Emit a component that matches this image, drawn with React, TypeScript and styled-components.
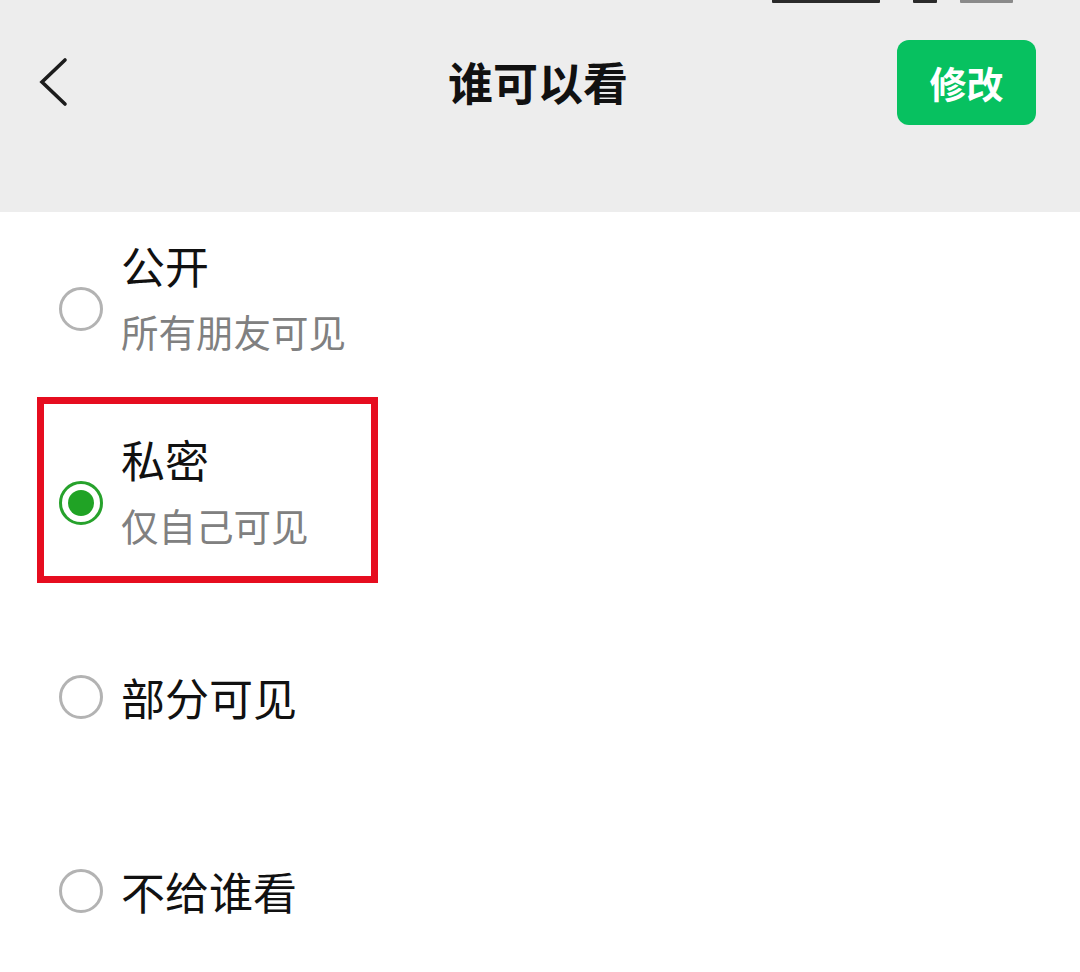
import * as React from "react";
import styled, { createGlobalStyle } from "styled-components";

const GlobalStyle = createGlobalStyle`
  html, body {
    margin: 0;
    padding: 0;
    background: #ffffff;
  }
  body {
    font-family: "Noto Sans CJK SC", "Noto Sans", sans-serif;
    -webkit-font-smoothing: antialiased;
  }
`;

const Page = styled.div`
  width: 1080px;
  height: 972px;
  overflow: hidden;
  background: #ffffff;
`;

const Header = styled.div`
  height: 212px;
  background: #ededed;
  display: flex;
  flex-direction: column;
`;

const StatusBar = styled.div`
  height: 30px;
  display: flex;
  justify-content: flex-end;
  align-items: flex-start;
  padding-right: 67px;
`;

const StatusMark = styled.div<{ $w: number; $gap: number; $light?: boolean }>`
  width: ${(p) => p.$w}px;
  margin-left: ${(p) => p.$gap}px;
  height: 3px;
  background: ${(p) => (p.$light ? "#8a8a8a" : "#2a2a2a")};
  border-radius: 0 0 1px 1px;
`;

const NavBar = styled.div`
  height: 104px;
  display: grid;
  grid-template-columns: 1fr auto 1fr;
  align-items: center;
  padding: 0 44px 0 38px;
`;

const BackButton = styled.div`
  display: flex;
  align-items: center;
  justify-self: start;
`;

const Title = styled.div`
  font-size: 45px;
  line-height: 56px;
  font-weight: 700;
  color: #111111;
  margin-left: 2px;
`;

const EditButton = styled.div`
  justify-self: end;
  width: 139px;
  height: 85px;
  border-radius: 12px;
  background: #07c160;
  color: #ffffff;
  font-size: 37px;
  font-weight: 700;
  display: flex;
  align-items: center;
  justify-content: center;
  margin-top: 1px;
`;

const List = styled.div`
  display: flex;
  flex-direction: column;
`;

const Row = styled.div`
  position: relative;
  height: 194px;
  display: flex;
  align-items: center;
  gap: 18px;
  padding-left: 59px;
`;

const Radio = styled.div<{ $checked?: boolean }>`
  flex: none;
  width: 44px;
  height: 44px;
  box-sizing: border-box;
  border-radius: 50%;
  border: 3px solid ${(p) => (p.$checked ? "#27a22c" : "#b3b3b3")};
  display: flex;
  align-items: center;
  justify-content: center;
  &::after {
    content: "";
    display: ${(p) => (p.$checked ? "block" : "none")};
    width: 26px;
    height: 26px;
    border-radius: 50%;
    background: #20a325;
  }
`;

const TextBlock = styled.div<{ $hasSub?: boolean }>`
  display: flex;
  flex-direction: column;
  margin-bottom: ${(p) => (p.$hasSub ? "20px" : "0")};
`;

const OptionTitle = styled.div`
  font-size: 44px;
  line-height: 64px;
  color: #111111;
`;

const OptionSub = styled.div`
  font-size: 37.5px;
  line-height: 68px;
  color: #808080;
`;

const Highlight = styled.div`
  position: absolute;
  left: 37px;
  top: -9px;
  width: 341px;
  height: 186px;
  box-sizing: border-box;
  border: 7px solid #e60d1f;
  pointer-events: none;
`;

const options = [
  { title: "公开", sub: "所有朋友可见" },
  { title: "私密", sub: "仅自己可见", checked: true, marked: true },
  { title: "部分可见" },
  { title: "不给谁看" },
];

const App = () => {
  return (
    <Page>
      <GlobalStyle />
      <Header>
        <StatusBar>
          <StatusMark $w={108} $gap={0} />
          <StatusMark $w={24} $gap={33} />
          <StatusMark $w={53} $gap={23} $light />
        </StatusBar>
        <NavBar>
          <BackButton>
            <svg width="30" height="50" viewBox="0 0 30 50">
              <polyline
                points="27,3 4,25 27,47"
                fill="none"
                stroke="#1c1c1c"
                strokeWidth="3.6"
                strokeLinecap="round"
                strokeLinejoin="miter"
              />
            </svg>
          </BackButton>
          <Title>谁可以看</Title>
          <EditButton>修改</EditButton>
        </NavBar>
      </Header>
      <List>
        {options.map((o) => (
          <Row key={o.title}>
            <Radio $checked={o.checked} />
            <TextBlock $hasSub={!!o.sub}>
              <OptionTitle>{o.title}</OptionTitle>
              {o.sub && <OptionSub>{o.sub}</OptionSub>}
            </TextBlock>
            {o.marked && <Highlight />}
          </Row>
        ))}
      </List>
    </Page>
  );
};

export default App;
